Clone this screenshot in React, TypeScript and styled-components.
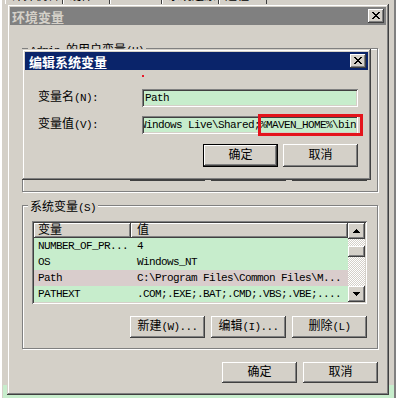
import React from 'react'
import styled, { createGlobalStyle } from 'styled-components'

const FACE = '#d4d0c8'
const GREEN = '#c7edcc'

const GlobalStyle = createGlobalStyle`
  html, body { margin:0; padding:0; }
  body {
    background:${FACE};
    font-family:"Liberation Mono","Noto Sans CJK SC",monospace;
    font-size:12px;
    line-height:12px;
    color:#000;
  }
  * { box-sizing:border-box; }
`

const Screen = styled.div`
  position:relative;
  width:396px;
  height:398px;
  overflow:hidden;
  padding:0 7px;
  display:flex;
  flex-direction:column;
  background:linear-gradient(to bottom, ${FACE} 0 385px, ${GREEN} 385px);
  box-shadow:inset 2px 0 #fff, inset 3px 0 ${FACE}, inset -2px 0 #808080;
`
const TabStrip = styled.div`
  display:flex;
  align-items:flex-end;
  height:4px;
  overflow:hidden;
  margin:0 -2px;
  flex:none;
`
const Tab = styled.div<{ $w: number }>`
  flex:none;
  width:${p => p.$w}px;
  height:16px;
  padding:1px 0 0 5px;
  border-left:1px solid #fff;
  border-right:1px solid #404040;
  font-family:"Noto Sans CJK SC",sans-serif;
`
const Window = styled.div`
  display:flex;
  flex-direction:column;
  padding:3px;
  background:${FACE};
  box-shadow:inset -1px -1px #404040, inset 1px 1px ${FACE}, inset -2px -2px #808080, inset 2px 2px #fff;
`
const MainWindow = styled(Window)`
  flex:none;
  width:382px;
  height:391px;
`
const EditWindow = styled(Window)`
  position:absolute;
  left:22px;
  top:49px;
  width:349px;
  height:131px;
`
const TitleBar = styled.div<{ $active?: boolean }>`
  flex:none;
  height:18px;
  display:flex;
  align-items:center;
  justify-content:space-between;
  padding:0 2px 0 ${p => (p.$active ? 4 : 2)}px;
  background:${p => (p.$active ? '#0a246a' : '#808080')};
  color:${p => (p.$active ? '#fff' : FACE)};
  font-family:"Noto Sans CJK SC",sans-serif;
  font-size:13px;
  font-weight:700;
  line-height:13px;
`
const CloseBox = styled.div`
  width:16px;
  height:14px;
  display:flex;
  align-items:center;
  justify-content:center;
  background:${FACE};
  box-shadow:inset -1px -1px #404040, inset 1px 1px #fff, inset -2px -2px #808080;
  & svg { display:block; margin:-1px 0 0 -1px; }
`
const MainBody = styled.div`
  flex:1;
  display:flex;
  flex-direction:column;
  padding:17px 8px 0 12px;
`
const Group = styled.fieldset`
  margin:0;
  min-width:0;
  padding:10px 10px 10px 9px;
  border:1px solid #808080;
  box-shadow:inset 1px 1px #fff, 1px 1px #fff;
  display:flex;
  flex-direction:column;
  gap:12px;
  & + & { margin-top:7px; }
`
const Legend = styled.legend`
  margin-left:-4px;
  padding:3px 2px 0;
  height:12px;
  line-height:12px;
  background:${FACE};
  white-space:nowrap;
`
const Lat = styled.span`
  font-family:"Liberation Mono",monospace;
  font-size:11px;
  letter-spacing:-0.6px;
`
const ListFrame = styled.div`
  height:83px;
  display:flex;
  padding:2px;
  background:${GREEN};
  box-shadow:inset 1px 1px #808080, inset -1px -1px #fff, inset 2px 2px #404040, inset -2px -2px ${FACE};
`
const ListBody = styled.div`
  flex:1;
  min-width:0;
  display:flex;
  flex-direction:column;
`
const HeaderRow = styled.div`
  flex:none;
  display:grid;
  grid-template-columns:97px minmax(0, 1fr);
  height:15px;
`
const HeaderCell = styled.div<{ $pad: number }>`
  display:flex;
  align-items:center;
  padding-left:${p => p.$pad}px;
  background:${FACE};
  box-shadow:inset -1px -1px #404040, inset 1px 1px #fff, inset -2px -2px #808080;
`
const Row = styled.div<{ $hl?: boolean }>`
  display:grid;
  grid-template-columns:97px minmax(0, 1fr);
  height:16px;
  align-items:center;
  background:${p => (p.$hl ? '#d9cdcc' : 'transparent')};
`
const Cell = styled.div<{ $pad: number }>`
  padding-left:${p => p.$pad}px;
  white-space:nowrap;
  overflow:hidden;
  font-family:"Liberation Mono",monospace;
  font-size:11px;
  letter-spacing:-0.6px;
`
const ScrollBar = styled.div`
  flex:none;
  width:17px;
  display:flex;
  flex-direction:column;
`
const ScrollTrack = styled.div`
  flex:1;
  background-color:${FACE};
  background-image:repeating-conic-gradient(#fff 0 25%, ${FACE} 0 50%);
  background-size:2px 2px;
`
const RaisedBox = styled.div<{ $h: number; $top?: number }>`
  height:${p => p.$h}px;
  margin-top:${p => p.$top ?? 0}px;
  display:flex;
  align-items:center;
  justify-content:center;
  background:${FACE};
  box-shadow:inset -1px -1px #404040, inset 1px 1px #fff, inset -2px -2px #808080;
`
const ButtonRow = styled.div<{ $gap: number; $top?: number }>`
  display:flex;
  justify-content:flex-end;
  gap:${p => p.$gap}px;
  margin-top:${p => p.$top ?? 0}px;
`
const Button = styled.button<{ $default?: boolean; $h?: number }>`
  width:75px;
  height:${p => p.$h ?? 22}px;
  padding:0;
  border:0;
  display:flex;
  align-items:center;
  justify-content:center;
  background:${FACE};
  color:#000;
  font:inherit;
  white-space:nowrap;
  box-shadow:${p =>
    p.$default
      ? `inset 0 0 0 1px #000, inset -2px -2px #404040, inset 2px 2px #fff, inset -3px -3px #808080`
      : `inset -1px -1px #404040, inset 1px 1px #fff, inset -2px -2px #808080, inset 2px 2px ${FACE}`};
`
const EditBody = styled.div`
  position:relative;
  flex:1;
  min-width:0;
  display:flex;
  flex-direction:column;
  padding:19px 10px 0 13px;
`
const Marker = styled.span`
  position:absolute;
  left:117px;
  top:5px;
  width:2px;
  height:2px;
  background:#e8182a;
`
const FieldGrid = styled.div`
  display:grid;
  grid-template-columns:104px minmax(0, 1fr);
  row-gap:9px;
  align-items:center;
`
const FieldLabel = styled.label`
  white-space:nowrap;
`
const Field = styled.div`
  position:relative;
  min-width:0;
  height:18px;
  display:flex;
  align-items:center;
  padding:0 2px;
  background:${GREEN};
  box-shadow:inset 1px 1px #808080, inset -1px -1px #fff, inset 2px 2px #404040, inset -2px -2px ${FACE};
`
const FieldText = styled.div`
  flex:1;
  min-width:0;
  overflow:hidden;
  display:flex;
  padding-left:1px;
  white-space:nowrap;
  font-family:"Liberation Mono",monospace;
  font-size:11px;
  letter-spacing:-0.6px;
`
/* the caret is near the end, so the value is shown scrolled by this many pixels */
const Scrolled = styled.span<{ $shift: number }>`
  flex:none;
  margin-left:-${p => p.$shift}px;
`
const Highlight = styled.span`
  position:absolute;
  left:116px;
  top:-2px;
  width:105px;
  height:22px;
  border:3px solid #e4141c;
`

const XGlyph = () => (
  <svg width="8" height="7" viewBox="0 0 8 7" shapeRendering="crispEdges">
    <path d="M0 0h2v1H0zM6 0h2v1H6zM1 1h2v1H1zM5 1h2v1H5zM2 2h4v1H2zM3 3h2v1H3zM2 4h4v1H2zM1 5h2v1H1zM5 5h2v1H5zM0 6h2v1H0zM6 6h2v1H6z" fill="#000" />
  </svg>
)
const Arrow = ({ down }: { down?: boolean }) => (
  <svg width="7" height="4" viewBox="0 0 7 4" shapeRendering="crispEdges" style={{ transform: down ? 'scaleY(-1)' : undefined }}>
    <path d="M3 0h1v1H3zM2 1h3v1H2zM1 2h5v1H1zM0 3h7v1H0z" fill="#000" />
  </svg>
)

type Variable = { name: string; value: string; hl?: boolean }

const userVars: Variable[] = [
  { name: 'TEMP', value: '%USERPROFILE%\\Local Settings\\Temp' },
  { name: 'TMP', value: '%USERPROFILE%\\Local Settings\\Temp' },
]
const systemVars: Variable[] = [
  { name: 'NUMBER_OF_PR...', value: '4' },
  { name: 'OS', value: 'Windows_NT' },
  { name: 'Path', value: 'C:\\Program Files\\Common Files\\M...', hl: true },
  { name: 'PATHEXT', value: '.COM;.EXE;.BAT;.CMD;.VBS;.VBE;....' },
]

const tabs = [
  { label: '计算机名', w: 58 },
  { label: '硬件', w: 47 },
  { label: '', w: 52 },
  { label: '系统还原', w: 57 },
  { label: '远程', w: 48 },
]

const hiddenPrefix = '%SystemRoot%\\system32;%SystemRoot%;%SystemRoot%\\System32\\Wbem;C:\\Program Files\\'
const pathValue = hiddenPrefix + 'Windows Live\\Shared;%MAVEN_HOME%\\bin'

function VarList({ rows }: { rows: Variable[] }) {
  return (
    <ListFrame>
      <ListBody>
        <HeaderRow>
          <HeaderCell $pad={4}>变量</HeaderCell>
          <HeaderCell $pad={6}>值</HeaderCell>
        </HeaderRow>
        {rows.map(r => (
          <Row key={r.name} $hl={r.hl}>
            <Cell $pad={4}>{r.name}</Cell>
            <Cell $pad={6}>{r.value}</Cell>
          </Row>
        ))}
      </ListBody>
      <ScrollBar>
        <RaisedBox $h={16}><Arrow /></RaisedBox>
        <ScrollTrack>
          <RaisedBox $h={11} $top={7} />
        </ScrollTrack>
        <RaisedBox $h={16}><Arrow down /></RaisedBox>
      </ScrollBar>
    </ListFrame>
  )
}

function GroupButtons() {
  return (
    <ButtonRow $gap={6}>
      <Button>新建<Lat>(W)...</Lat></Button>
      <Button>编辑<Lat>(I)...</Lat></Button>
      <Button>删除<Lat>(L)</Lat></Button>
    </ButtonRow>
  )
}

export default function App() {
  return (
    <>
      <GlobalStyle />
      <Screen>
        <TabStrip>
          {tabs.map((t, i) => (
            <Tab key={i} $w={t.w}>{t.label}</Tab>
          ))}
        </TabStrip>

        <MainWindow>
          <TitleBar>
            <span>环境变量</span>
            <CloseBox><XGlyph /></CloseBox>
          </TitleBar>
          <MainBody>
            <Group>
              <Legend><Lat>Admin </Lat>的用户变量<Lat>(U)</Lat></Legend>
              <VarList rows={userVars} />
              <GroupButtons />
            </Group>
            <Group>
              <Legend>系统变量<Lat>(S)</Lat></Legend>
              <VarList rows={systemVars} />
              <GroupButtons />
            </Group>
            <ButtonRow $gap={6} $top={13}>
              <Button $h={21}>确定</Button>
              <Button $h={21}>取消</Button>
            </ButtonRow>
          </MainBody>
        </MainWindow>

        <EditWindow>
          <TitleBar $active>
            <span>编辑系统变量</span>
            <CloseBox><XGlyph /></CloseBox>
          </TitleBar>
          <EditBody>
            <Marker />
            <FieldGrid>
              <FieldLabel>变量名<Lat>(N):</Lat></FieldLabel>
              <Field>
                <FieldText>Path</FieldText>
              </Field>
              <FieldLabel>变量值<Lat>(V):</Lat></FieldLabel>
              <Field>
                <FieldText>
                  <Scrolled $shift={hiddenPrefix.length * 6 + 5}>{pathValue}</Scrolled>
                </FieldText>
                <Highlight />
              </Field>
            </FieldGrid>
            <ButtonRow $gap={5} $top={10}>
              <Button $default $h={23}>确定</Button>
              <Button $h={23}>取消</Button>
            </ButtonRow>
          </EditBody>
        </EditWindow>
      </Screen>
    </>
  )
}
